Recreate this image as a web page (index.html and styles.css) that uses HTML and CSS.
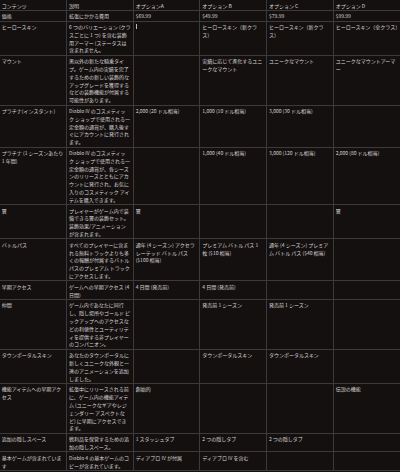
FILE: index.html
```html
<!DOCTYPE html>
<html lang="ja">
<head>
<meta charset="utf-8">
<title>エディション比較</title>
<link rel="stylesheet" href="styles.css">
</head>
<body>
<table class="cmp">
<colgroup><col><col><col><col><col><col></colgroup>
<thead>
<tr><th>コンテンツ</th><th>説明</th><th>オプションA</th><th>オプション B</th><th>オプション C</th><th>オプション D</th></tr>
</thead>
<tbody>
<tr><td>価格</td><td>拡張にかかる費用</td><td>$69.99</td><td>$49.99</td><td>$79.99</td><td>$99.99</td></tr>
<tr><td>ヒーロースキン</td><td>6 つのバリエーション (クラスごとに 1 つ) を含む装飾用アーマー (ステータスは含まれません。</td><td><span class="caret"></span></td><td>ヒーロースキン（新クラス）</td><td>ヒーロースキン（新クラス）</td><td>ヒーロースキン（全クラス）</td></tr>
<tr><td>マウント</td><td>黒以外の新たな騎乗タイプ。ゲーム内の実績を完了するための新しい装飾的なアップグレードを獲得するなどの装飾機能が付属する可能性があります。</td><td></td><td>実績に応じて進化するユニークなマウント</td><td>ユニークなマウント</td><td>ユニークなマウントアーマー</td></tr>
<tr><td>プラチナ(インスタント)</td><td>Diablo IV のコスメティッ<br>ク ショップで使用される一定金額の通貨が、購入後すぐにアカウントに発行されます。</td><td>2,000 (20 ドル相当)</td><td>1,000 (10 ドル相当)</td><td>3,000 (30 ドル相当)</td><td></td></tr>
<tr><td>プラチナ (1 シーズンあたり 1 年間)</td><td>Diablo IV のコスメティッ<br>ク ショップで使用される一定金額の通貨が、各シーズンのリリースとともにアカウントに発行され、お気に入りのコスメティック アイテムを購入できます。</td><td></td><td>1,000 (40 ドル相当)</td><td>3,000 (120 ドル相当)</td><td>2,000 (80 ドル相当)</td></tr>
<tr><td>翼</td><td>プレイヤーがゲーム内で装備できる翼の装飾セット。装飾効果/アニメーション<br>が含まれます。</td><td>翼</td><td></td><td></td><td>翼</td></tr>
<tr><td>バトルパス</td><td>すべてのプレイヤーに含まれる無料トラックよりも多くの報酬が付属するバトルパスのプレミアム トラックにアクセスします。</td><td>通年 (4 シーズン) アクセラレーテッド バトル パス ($100 相当)</td><td>プレミアム バトル パス 1 枚 ($10 相当)</td><td>通年 (4 シーズン) プレミアム バトル パス ($40 相当)</td><td></td></tr>
<tr><td>早期アクセス</td><td>ゲームへの早期アクセス (4 日間)</td><td>4 日間 (発売前)</td><td>4 日間 (発売前)</td><td></td><td></td></tr>
<tr><td>仲間</td><td>ゲーム内であなたに同行し、隠し場所やゴールド ピックアップへのアクセスなどの利便性とユーティリティを提供する非プレイヤーのコンパニオン。</td><td></td><td>発売前 1 シーズン</td><td>発売前 1 シーズン</td><td></td></tr>
<tr><td>タウンポータルスキン</td><td>あなたのタウンポータルに新しくユニークな外観と一連のアニメーションを追加しました。</td><td></td><td>タウンポータルスキン</td><td>タウンポータルスキン</td><td></td></tr>
<tr><td>機能アイテムへの早期アクセス</td><td>拡張中にリリースされる前に、ゲーム内の機能アイテム (ユニークなギアやレジェンダリー アスペクトなど) に早期にアクセスできます。</td><td>創始的</td><td></td><td></td><td>伝説の機能</td></tr>
<tr><td>追加の隠しスペース</td><td>戦利品を保管するための追加の隠しスペース。</td><td>1 スタッシュタブ</td><td>2 つの隠しタブ</td><td>2 つの隠しタブ</td><td></td></tr>
<tr><td>基本ゲームが含まれています</td><td>Diablo 4 の基本ゲームのコピーが含まれています。</td><td>ディアブロ IV が付属</td><td>ディアブロ IV を含む</td><td></td><td></td></tr>
</tbody>
</table>
</body>
</html>
```

FILE: styles.css
```css
html, body {
  margin: 0;
  padding: 0;
  background: #151010;
}

body {
  width: 400px;
  height: 472px;
  overflow: hidden;
  font-family: "Noto Sans CJK JP", "Noto Sans", "Liberation Sans", sans-serif;
  color: #d9d6d6;
}

.cmp {
  width: 400px;
  table-layout: fixed;
  border-collapse: collapse;
  font-size: 5px;
  line-height: 7.8px;
  line-break: normal;
}

.cmp th,
.cmp td {
  border: 1px solid #3e3a3a;
  padding: 1.5px 1.85px 0.5px;
  text-align: left;
  vertical-align: top;
  font-weight: normal;
  overflow-wrap: anywhere;
}

.cmp th:first-child,
.cmp td:first-child {
  border-left: none;
}

.cmp th:last-child,
.cmp td:last-child {
  border-right: none;
}

.cmp thead th {
  border-top: none;
}

.caret {
  display: inline-block;
  width: 1px;
  height: 5px;
  margin-top: 1px;
  background: #bdb8b8;
  vertical-align: top;
}
```
